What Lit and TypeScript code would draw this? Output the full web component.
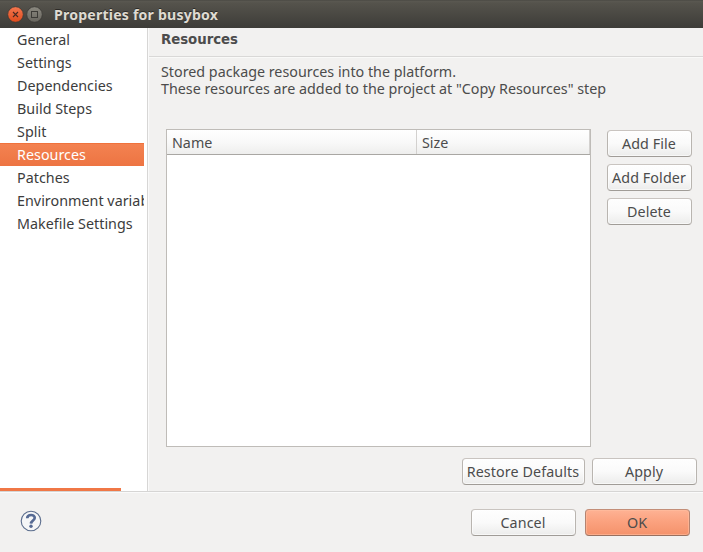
import { LitElement, html, css } from "lit";
import { customElement, property, state } from "lit/decorators.js";
import { classMap } from "lit/directives/class-map.js";

@customElement("gtk-button")
class GtkButton extends LitElement {
  @property({ type: Boolean, reflect: true }) primary = false;

  static styles = css`
    :host {
      display: block;
      box-sizing: border-box;
      height: 27px;
      border: 1px solid;
      border-color: #c9c4c0 #b9b5b0 #a09c97 #b9b5b0;
      border-radius: 4px;
      background: linear-gradient(#fefefe, #fafafa 50%, #ececeb);
      box-shadow: inset 0 0 0 1px rgba(255, 255, 255, 0.6);
      letter-spacing: 0.1px;
    }
    :host([primary]) {
      border-color: #c38e78 #b48370 #98705f #b48370;
      background: linear-gradient(#feb294, #fba27f 45%, #f4926b);
      box-shadow: inset 0 0 0 1px rgba(255, 190, 160, 0.6);
    }
    button {
      display: block;
      width: 100%;
      height: 25px;
      padding: 0 1px 0 0;
      border: 0;
      background: none;
      color: inherit;
      font: inherit;
      letter-spacing: inherit;
      line-height: 25px;
      text-align: center;
      white-space: nowrap;
    }
  `;

  render() {
    return html`<button><slot></slot></button>`;
  }
}

@customElement("app-root")
class AppRoot extends LitElement {
  @state() private selected = "Resources";

  private pages = [
    "General",
    "Settings",
    "Dependencies",
    "Build Steps",
    "Split",
    "Resources",
    "Patches",
    "Environment variables",
    "Makefile Settings",
  ];

  static styles = css`
    :host {
      display: flex;
      flex-direction: column;
      width: 703px;
      height: 552px;
      overflow: hidden;
      background: #f2f1f0;
      color: #4c4c4c;
      font: 14.3px/17px "Noto Sans", "Open Sans", sans-serif;
    }
    .titlebar {
      display: flex;
      align-items: center;
      flex: none;
      box-sizing: border-box;
      height: 28px;
      padding-left: 7px;
      background: linear-gradient(#45443f, #5a5851 1px, #55534c 3px, #3d3c38);
      color: #dfdbd2;
      font-weight: 700;
      font-size: 14.1px;
      letter-spacing: 0.2px;
      white-space: nowrap;
    }
    .titlebar svg { margin-right: 11px; }
    .titlebar span { text-shadow: 0 -1px #2c2b28; }
    .main { display: flex; height: 463px; flex: none; }
    .side {
      display: flex;
      flex-direction: column;
      box-sizing: border-box;
      width: 148px;
      border-right: 1px solid #d7d6d5;
      background: #fff;
      color: #3c3c3c;
    }
    .item {
      box-sizing: border-box;
      width: 144px;
      height: 23px;
      padding-left: 17px;
      line-height: 23px;
      letter-spacing: 0.03px;
      overflow: hidden;
      white-space: nowrap;
    }
    .item.on {
      color: #fff;
      background: linear-gradient(#f0723c 1px, #f38251 1px, #ed7442);
    }
    .scroll { width: 121px; height: 3px; margin-top: auto; background: #f07746; }
    .content { flex: 1; border-left: 1px solid #fafafa; }
    .heading {
      box-sizing: border-box;
      height: 29px;
      padding: 3px 0 0 12px;
      border-bottom: 1px solid #d9d8d7;
      box-shadow: 0 1px #f9f9f8;
      font: 700 13.33px/17px "DejaVu Sans", sans-serif;
      letter-spacing: -0.05px;
    }
    .desc { margin: 6px 0 0 12px; height: 34px; white-space: nowrap; }
    .row { display: flex; gap: 16px; margin: 32px 0 0 17px; }
    .table {
      box-sizing: border-box;
      width: 425px;
      height: 318px;
      border: 1px solid #bfbcb8;
      background: #fff;
    }
    .thead {
      display: flex;
      box-sizing: border-box;
      height: 25px;
      border-bottom: 1px solid #a9a7a3;
      background: linear-gradient(#fff, #f9f9f9 50%, #eeeeed);
      line-height: 26px;
    }
    .th {
      box-sizing: border-box;
      padding-left: 5px;
      border-right: 1px solid #d3d1cf;
    }
    .name { width: 250px; }
    .size { width: 173px; }
    .actions { display: flex; flex-direction: column; gap: 7px; width: 85px; padding-top: 1px; }
    .apply { display: flex; gap: 7px; margin: 11px 6px 0 0; justify-content: flex-end; }
    .footer {
      display: flex;
      flex: 1;
      box-sizing: border-box;
      border-top: 1px solid #d6d5d4;
      box-shadow: inset 0 1px #fafafa;
      padding: 17px 13px 0 20px;
      gap: 9px;
    }
    .help { margin: 1px auto 0 0; }
    .w105 { width: 105px; }
    .w123 { width: 123px; }
  `;

  render() {
    return html`
      <div class="titlebar">
        <svg width="36" height="18" viewBox="0 0 36 18">
          <defs>
            <linearGradient id="red" x2="0" y2="1">
              <stop stop-color="#f4774f" /><stop offset="1" stop-color="#df4b1c" />
            </linearGradient>
            <linearGradient id="grey" x2="0" y2="1">
              <stop stop-color="#8b8980" /><stop offset="1" stop-color="#67655e" />
            </linearGradient>
          </defs>
          <circle cx="8.5" cy="9.5" r="7.8" fill="url(#red)" stroke="#3a3935" stroke-width="0.8" />
          <path d="M6 7l5 5M11 7l-5 5" stroke="#4a2a22" stroke-width="1.1" />
          <circle cx="27.5" cy="9.5" r="7.8" fill="url(#grey)" stroke="#3a3935" stroke-width="0.8" />
          <rect x="24.5" y="6.5" width="6" height="6" fill="none" stroke="#3c3b37" />
        </svg>
        <span>Properties for busybox</span>
      </div>
      <div class="main">
        <div class="side">
          ${this.pages.map(
            (p) => html`<div
              class=${classMap({ item: true, on: p === this.selected })}
              @click=${() => (this.selected = p)}
            >${p}</div>`
          )}
          <div class="scroll"></div>
        </div>
        <div class="content">
          <div class="heading">Resources</div>
          <div class="desc">
            Stored package resources into the platform.<br />
            These resources are added to the project at "Copy Resources" step
          </div>
          <div class="row">
            <div class="table">
              <div class="thead">
                <div class="th name">Name</div>
                <div class="th size">Size</div>
              </div>
            </div>
            <div class="actions">
              <gtk-button>Add File</gtk-button>
              <gtk-button>Add Folder</gtk-button>
              <gtk-button>Delete</gtk-button>
            </div>
          </div>
          <div class="apply">
            <gtk-button class="w123">Restore Defaults</gtk-button>
            <gtk-button class="w105">Apply</gtk-button>
          </div>
        </div>
      </div>
      <div class="footer">
        <svg class="help" width="22" height="22" viewBox="0 0 22 22">
          <circle cx="11" cy="11" r="9.8" fill="#f5f6f7" stroke="#5a6c8c" stroke-width="1.1" />
          <path d="M7.2 8.2C7.4 3.9 15 4 14.7 8C14.5 10.4 11.1 10.6 11 13.6" fill="none" stroke="#566a94" stroke-width="2.7" />
          <circle cx="11" cy="16.3" r="1.7" fill="#566a94" />
        </svg>
        <gtk-button class="w105">Cancel</gtk-button>
        <gtk-button class="w105" primary>OK</gtk-button>
      </div>
    `;
  }
}
